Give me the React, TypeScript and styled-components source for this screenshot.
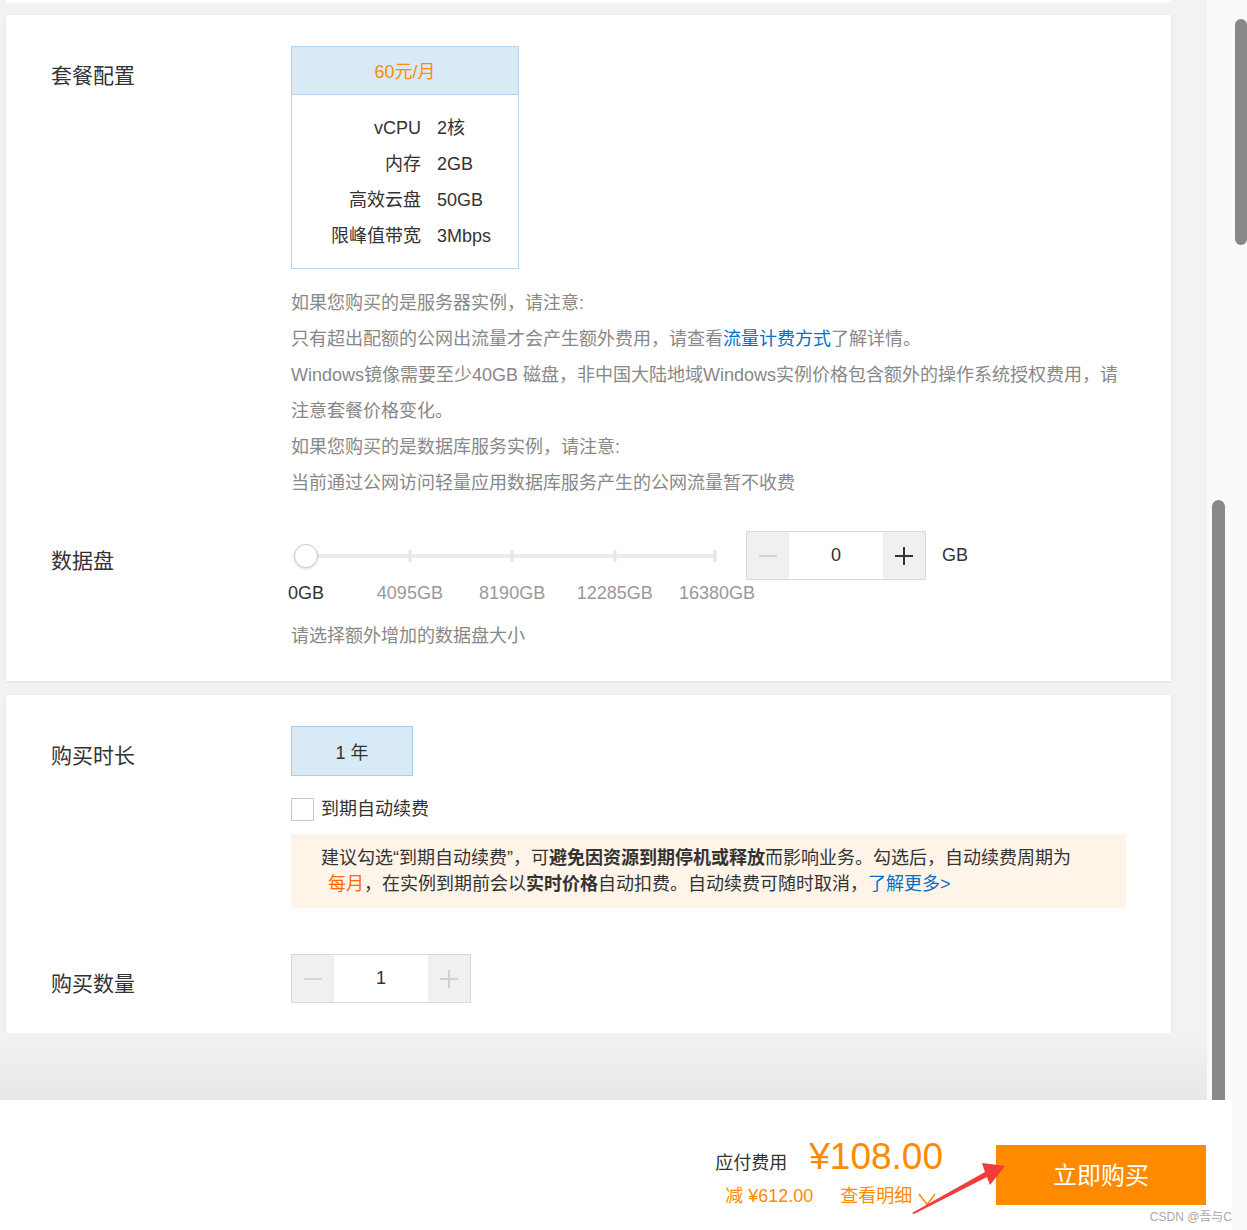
import styled, { createGlobalStyle } from 'styled-components';

const GlobalStyle = createGlobalStyle`
  html, body {
    margin: 0;
    padding: 0;
  }
  body {
    background: #fafafa;
    font-family: "Liberation Sans", "Noto Sans CJK SC", sans-serif;
    color: #333;
  }
`;

const specs = [
  { name: 'vCPU', value: '2核' },
  { name: '内存', value: '2GB' },
  { name: '高效云盘', value: '50GB' },
  { name: '限峰值带宽', value: '3Mbps' },
];

// positions in % of the slider rail
const marks = [
  { pct: 0, tick: 0, text: '0GB' },
  { pct: 25.4, tick: 25.4, text: '4095GB' },
  { pct: 50.4, tick: 50.4, text: '8190GB' },
  { pct: 75.5, tick: 75.5, text: '12285GB' },
  { pct: 100.5, tick: 100, text: '16380GB' },
];

const MinusIcon = ({ color }: { color: string }) => (
  <svg width="20" height="20" viewBox="0 0 20 20">
    <line x1="1" y1="10" x2="19" y2="10" stroke={color} strokeWidth="1.6" />
  </svg>
);

const PlusIcon = ({ color }: { color: string }) => (
  <svg width="20" height="20" viewBox="0 0 20 20">
    <line x1="1" y1="10" x2="19" y2="10" stroke={color} strokeWidth="2" />
    <line x1="10" y1="1" x2="10" y2="19" stroke={color} strokeWidth="2" />
  </svg>
);

const Counter = ({ value, plusActive }: { value: number; plusActive?: boolean }) => (
  <Stepper>
    <StepBtn>
      <MinusIcon color="#cfcfcf" />
    </StepBtn>
    <StepValue>{value}</StepValue>
    <StepBtn>
      <PlusIcon color={plusActive ? '#333' : '#cfcfcf'} />
    </StepBtn>
  </Stepper>
);

const App = () => {
  return (
    <Page>
      <GlobalStyle />
      <Frame>
        <ScrollArea>
          <Content>
            <PrevCardEdge />
            <Card $top={12} $bottom={33}>
              <Row>
                <Label>套餐配置</Label>
                <div>
                  <PackageBox>
                    <PackageHead>60元/月</PackageHead>
                    <PackageBody>
                      {specs.map((s) => (
                        <SpecRow key={s.name}>
                          <SpecName>{s.name}</SpecName>
                          <span>{s.value}</span>
                        </SpecRow>
                      ))}
                    </PackageBody>
                  </PackageBox>
                  <Notes>
                    <p>如果您购买的是服务器实例，请注意:</p>
                    <p>
                      只有超出配额的公网出流量才会产生额外费用，请查看<Link>流量计费方式</Link>了解详情。
                    </p>
                    <p>
                      Windows镜像需要至少40GB 磁盘，非中国大陆地域Windows实例价格包含额外的操作系统授权费用，请
                      <br />
                      注意套餐价格变化。
                    </p>
                    <p>如果您购买的是数据库服务实例，请注意:</p>
                    <p>当前通过公网访问轻量应用数据库服务产生的公网流量暂不收费</p>
                  </Notes>
                </div>
              </Row>
              <Row $gap={30}>
                <Label>数据盘</Label>
                <div>
                  <ControlRow>
                    <SliderWrap>
                      <Rail />
                      {marks.slice(1).map((m) => (
                        <Mark key={m.text} style={{ left: `${m.tick}%` }} />
                      ))}
                      <Thumb />
                    </SliderWrap>
                    <StepperSpace>
                      <Counter value={0} plusActive />
                    </StepperSpace>
                    <Unit>GB</Unit>
                  </ControlRow>
                  <MarkLabels>
                    {marks.map((m, i) => (
                      <MarkLabel key={m.text} $active={i === 0} style={{ left: `${m.pct}%` }}>
                        {m.text}
                      </MarkLabel>
                    ))}
                  </MarkLabels>
                  <Hint>请选择额外增加的数据盘大小</Hint>
                </div>
              </Row>
            </Card>
            <Card $top={14} $bottom={30}>
              <Row>
                <Label>购买时长</Label>
                <div>
                  <DurationOption>1 年</DurationOption>
                  <CheckRow>
                    <CheckBox />
                    <span>到期自动续费</span>
                  </CheckRow>
                  <Notice>
                    建议勾选“到期自动续费”，可<b>避免因资源到期停机或释放</b>而影响业务。勾选后，自动续费周期为
                    <br />
                    <Accent>每月</Accent>，在实例到期前会以<b>实时价格</b>自动扣费。自动续费可随时取消，
                    <Link>了解更多&gt;</Link>
                  </Notice>
                </div>
              </Row>
              <Row $gap={46}>
                <Label>购买数量</Label>
                <div>
                  <Counter value={1} />
                </div>
              </Row>
            </Card>
            <FooterShade />
          </Content>
          <InnerTrack>
            <InnerThumb />
          </InnerTrack>
        </ScrollArea>
        <Footer>
          <PriceBlock>
            <PriceRow>
              <PriceLabel>应付费用</PriceLabel>
              <Price>¥108.00</Price>
            </PriceRow>
            <SubRow>
              <Discount>减 ¥612.00</Discount>
              <Detail>
                查看明细
                <svg width="18" height="13" viewBox="0 0 18 13">
                  <polyline points="1,1 9,11.5 17,1" fill="none" stroke="#ff8a00" strokeWidth="1.5" />
                </svg>
              </Detail>
            </SubRow>
          </PriceBlock>
          <BuyButton>立即购买</BuyButton>
          <Arrow width="110" height="65" viewBox="0 0 110 65">
            <polygon points="12,58 85,17 82,8 105,11 90,30 87,22 14,59" fill="#f23b3b" />
          </Arrow>
          <Watermark>CSDN @吾与C</Watermark>
        </Footer>
      </Frame>
      <OuterTrack>
        <OuterThumb />
      </OuterTrack>
    </Page>
  );
};

export default App;

const Page = styled.div`
  display: flex;
  width: 1247px;
  height: 1230px;
  overflow: hidden;
`;

const Frame = styled.div`
  width: 1232px;
  display: flex;
  flex-direction: column;
`;

const ScrollArea = styled.div`
  height: 1100px;
  display: flex;
`;

const Content = styled.div`
  width: 1207px;
  background: #f1f2f4;
  display: flex;
  flex-direction: column;
  overflow: hidden;
`;

const PrevCardEdge = styled.div`
  width: 1165px;
  height: 3px;
  margin-left: 6px;
  background: #fff;
  flex-shrink: 0;
`;

const Card = styled.section<{ $top: number; $bottom: number }>`
  width: 1165px;
  margin: ${(p) => p.$top}px 0 0 6px;
  padding: 31px 0 ${(p) => p.$bottom}px 45px;
  box-sizing: border-box;
  background: #fff;
  box-shadow: 0 1px 3px rgba(0, 0, 0, 0.08);
  flex-shrink: 0;
`;

const Row = styled.div<{ $gap?: number }>`
  display: grid;
  grid-template-columns: 240px 1fr;
  margin-top: ${(p) => p.$gap || 0}px;
`;

const Label = styled.div`
  font-size: 21px;
  line-height: 30px;
  margin-top: 15px;
  color: #333;
`;

const PackageBox = styled.div`
  width: 228px;
  border: 1px solid #b5d5f0;
  box-sizing: border-box;
`;

const PackageHead = styled.div`
  height: 48px;
  padding-bottom: 2px;
  box-sizing: border-box;
  background: #d9eaf7;
  border-bottom: 1px solid #b5d5f0;
  color: #ff8a00;
  font-size: 18px;
  display: flex;
  align-items: center;
  justify-content: center;
`;

const PackageBody = styled.div`
  padding: 15px 0 14px;
`;

const SpecRow = styled.div`
  display: grid;
  grid-template-columns: 129px 1fr;
  column-gap: 16px;
  font-size: 18px;
  line-height: 36px;
  color: #333;
`;

const SpecName = styled.span`
  text-align: right;
`;

const Notes = styled.div`
  margin-top: 16px;
  font-size: 18px;
  line-height: 36px;
  color: #888;
  p {
    margin: 0;
  }
`;

const Link = styled.span`
  color: #0070cc;
`;

const ControlRow = styled.div`
  display: flex;
  align-items: center;
  height: 49px;
`;

const SliderWrap = styled.div`
  position: relative;
  width: 409px;
  height: 24px;
  margin-left: 15px;
`;

const Rail = styled.div`
  position: absolute;
  left: 0;
  right: 0;
  top: 10px;
  height: 4px;
  background: #ececec;
`;

const Mark = styled.span`
  position: absolute;
  top: 6px;
  width: 3px;
  height: 12px;
  background: #e6e6e6;
  transform: translateX(-50%);
`;

const Thumb = styled.span`
  position: absolute;
  top: 0;
  left: 0;
  width: 24px;
  height: 24px;
  box-sizing: border-box;
  border-radius: 50%;
  border: 1px solid #c9c9d0;
  background: #fff;
  transform: translateX(-50%);
  box-shadow: 0 1px 3px rgba(0, 0, 0, 0.15);
`;

const StepperSpace = styled.div`
  margin-left: 31px;
`;

const Stepper = styled.div`
  display: flex;
  height: 49px;
  border: 1px solid #d9d9d9;
  box-sizing: border-box;
  width: max-content;
`;

const StepBtn = styled.div`
  width: 42px;
  background: #f0f0f0;
  display: flex;
  align-items: center;
  justify-content: center;
`;

const StepValue = styled.div`
  width: 94px;
  display: flex;
  align-items: center;
  justify-content: center;
  font-size: 18px;
  color: #333;
  background: #fff;
`;

const Unit = styled.span`
  margin-left: 16px;
  font-size: 18px;
  color: #333;
`;

const MarkLabels = styled.div`
  position: relative;
  width: 409px;
  height: 24px;
  margin: 1px 0 0 15px;
`;

const MarkLabel = styled.span<{ $active?: boolean }>`
  position: absolute;
  top: 0;
  transform: translateX(-50%);
  font-size: 18px;
  line-height: 24px;
  white-space: nowrap;
  color: ${(p) => (p.$active ? '#333' : '#999')};
`;

const Hint = styled.div`
  margin-top: 19px;
  font-size: 18px;
  line-height: 24px;
  color: #888;
`;

const DurationOption = styled.div`
  width: 122px;
  height: 50px;
  box-sizing: border-box;
  border: 1px solid #a8cdee;
  background: #d9eaf7;
  display: flex;
  align-items: center;
  justify-content: center;
  font-size: 18px;
  color: #333;
`;

const CheckRow = styled.div`
  display: flex;
  align-items: center;
  gap: 7px;
  height: 23px;
  margin-top: 22px;
  font-size: 18px;
  line-height: 23px;
  color: #333;
`;

const CheckBox = styled.span`
  width: 23px;
  height: 23px;
  box-sizing: border-box;
  border: 1px solid #c8c8c8;
  background: #fff;
`;

const Notice = styled.div`
  width: 835px;
  margin-top: 13px;
  padding: 11px 20px 11px 30px;
  box-sizing: border-box;
  background: #fff4e8;
  font-size: 18px;
  line-height: 26px;
  color: #333;
  b {
    font-weight: bold;
  }
`;

const Accent = styled.span`
  margin-left: 7px;
  color: #ff6a00;
`;

const FooterShade = styled.div`
  flex: 1;
  background: linear-gradient(#f1f2f4, #e7e8ea);
`;

const InnerTrack = styled.div`
  width: 25px;
  background: #fafafa;
  display: flex;
  flex-direction: column;
  padding-top: 500px;
  box-sizing: border-box;
`;

const InnerThumb = styled.div`
  flex: 1;
  width: 13px;
  margin-left: 5px;
  background: #888;
  border-radius: 7px 7px 0 0;
`;

const Footer = styled.footer`
  position: relative;
  height: 130px;
  background: #fff;
  display: flex;
  justify-content: flex-end;
  align-items: flex-start;
  padding-right: 26px;
`;

const PriceBlock = styled.div`
  margin-top: 35px;
  display: flex;
  flex-direction: column;
`;

const PriceRow = styled.div`
  display: flex;
  align-items: baseline;
  gap: 22px;
`;

const PriceLabel = styled.span`
  font-size: 18px;
  color: #333;
`;

const Price = styled.span`
  font-size: 37px;
  line-height: 44px;
  color: #ff8a00;
`;

const SubRow = styled.div`
  display: flex;
  align-items: center;
  margin-top: 5px;
  padding-left: 10px;
  font-size: 18px;
  line-height: 24px;
  color: #ff8a00;
`;

const Discount = styled.span``;

const Detail = styled.span`
  margin-left: 27px;
  display: flex;
  align-items: center;
  gap: 6px;
  svg {
    margin-top: 6px;
  }
`;

const BuyButton = styled.button`
  margin: 45px 0 0 53px;
  width: 210px;
  height: 60px;
  border: none;
  background: #ff8a00;
  color: #fff;
  font-family: inherit;
  font-size: 24px;
  padding: 0 0 4px;
`;

const Arrow = styled.svg`
  position: absolute;
  left: 900px;
  top: 55px;
`;

const Watermark = styled.span`
  position: absolute;
  right: 0;
  bottom: 6px;
  font-size: 12px;
  color: #aaa;
`;

const OuterTrack = styled.div`
  width: 15px;
  background: #fafafa;
  padding-top: 19px;
  box-sizing: border-box;
`;

const OuterThumb = styled.div`
  width: 12px;
  height: 226px;
  margin-left: 3px;
  background: #888;
  border-radius: 6px;
`;
